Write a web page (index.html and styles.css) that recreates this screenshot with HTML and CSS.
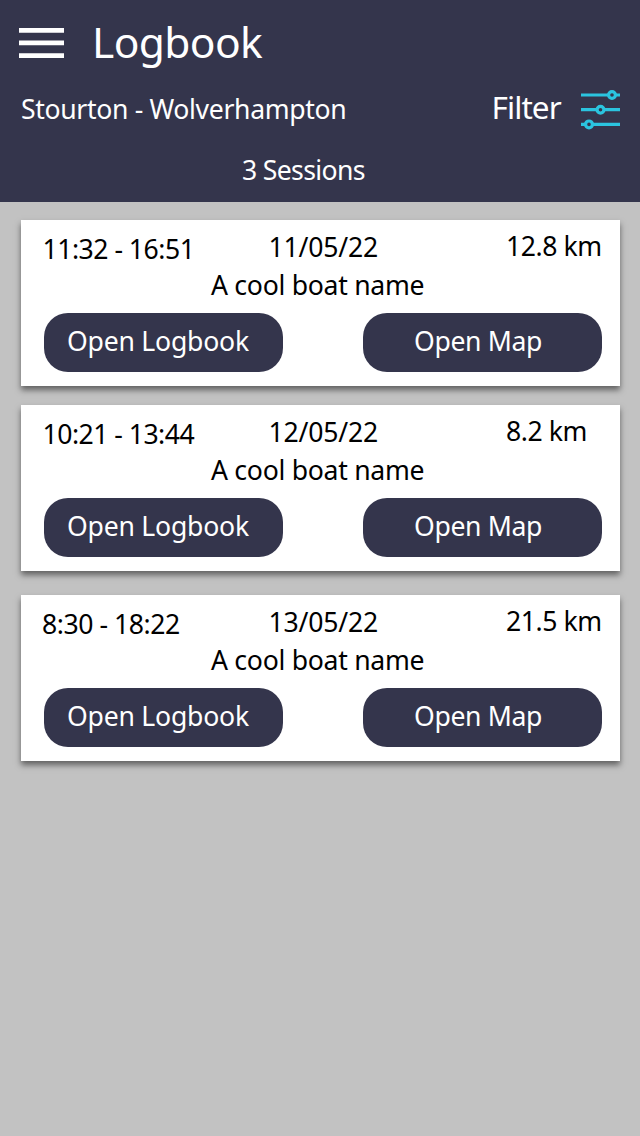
FILE: index.html
```html
<!DOCTYPE html>
<html lang="en">
<head>
<meta charset="utf-8">
<title>Logbook</title>
<link rel="stylesheet" href="styles.css">
</head>
<body>
<header class="header">
  <div class="title-row">
    <svg class="menu" viewBox="0 0 45 30" aria-label="Menu"><path fill="#fff" d="M0 0h45v4.7H0zM0 12.6h45v4.7H0zM0 25.3h45V30H0z"/></svg>
    <h1 class="title">Logbook</h1>
  </div>
  <div class="route-row">
    <span class="route">Stourton - Wolverhampton</span>
    <span class="filter">Filter</span>
    <svg class="filter-icon" viewBox="0 0 39 40" fill="none" stroke="#2bc4df" stroke-width="3.2">
      <path d="M0 5h27.5M34.500 5H39M0 19.700h16M23 19.700h16M0 34.400h4.500M11.500 34.400H39"/>
      <circle cx="31" cy="5" r="3.400"/><circle cx="19.500" cy="19.700" r="3.400"/><circle cx="8" cy="34.400" r="3.400"/>
    </svg>
  </div>
  <div class="sessions">3 Sessions</div>
</header>
<main class="list">
  <article class="card">
    <div class="info">
      <span class="time time-narrow">11:32 - 16:51</span><span class="date">11/05/22</span><span class="distance">12.8 km</span>
    </div>
    <div class="boat">A cool boat name</div>
    <div class="actions"><button class="button button-log">Open Logbook</button><button class="button button-map">Open Map</button></div>
  </article>
  <article class="card">
    <div class="info">
      <span class="time">10:21 - 13:44</span><span class="date">12/05/22</span><span class="distance">8.2 km</span>
    </div>
    <div class="boat">A cool boat name</div>
    <div class="actions"><button class="button button-log">Open Logbook</button><button class="button button-map">Open Map</button></div>
  </article>
  <article class="card card-last">
    <div class="info">
      <span class="time time-short">8:30 - 18:22</span><span class="date">13/05/22</span><span class="distance">21.5 km</span>
    </div>
    <div class="boat">A cool boat name</div>
    <div class="actions"><button class="button button-log">Open Logbook</button><button class="button button-map">Open Map</button></div>
  </article>
</main>
</body>
</html>
```
FILE: styles.css
```css
* { box-sizing: border-box; }

body {
  margin: 0;
  min-height: 1136px;
  background: #c2c2c2;
  color: #000;
  font: 26.6px/30px "Noto Sans", "Open Sans", sans-serif;
  white-space: nowrap;
}

.header {
  height: 202px;
  background: #34354c;
  color: #fff;
}

.title-row {
  display: flex;
  height: 84px;
  padding: 16px 0 0 19px;
}

.menu {
  width: 45px;
  height: 30px;
  margin-top: 12px;
}

.title {
  margin: 1px 0 0 28px;
  font-size: 42.5px;
  font-weight: 400;
  line-height: 50px;
  letter-spacing: -0.6px;
}

.route-row {
  display: grid;
  grid-template-columns: 469.5px 90.5px 39px;
  height: 71px;
  padding-left: 21px;
}

.route {
  margin-top: 10px;
  letter-spacing: -0.34px;
}

.filter {
  margin-top: 8px;
  padding-left: 1px;
  font-size: 31.5px;
  letter-spacing: -0.9px;
}

.filter-icon {
  width: 39px;
  height: 40px;
  margin-top: 6px;
}

.sessions {
  padding-left: 242px;
  letter-spacing: -0.65px;
}

.list {
  padding: 18px 20px 0 21px;
}

.card {
  height: 166px;
  margin-bottom: 19px;
  padding-top: 10px;
  background: #fff;
  box-shadow: 0 4px 6px rgba(0, 0, 0, 0.5);
}

.card-last {
  margin-top: 24px;
}

.info {
  display: grid;
  grid-template-columns: 226px 237px 1fr;
  height: 40px;
  padding-left: 22px;
}

.time {
  margin-top: 4px;
  margin-left: -0.5px;
  letter-spacing: -0.52px;
}

.time-narrow {
  letter-spacing: -0.5px;
}

.time-short {
  margin-left: -1px;
  letter-spacing: -0.45px;
}

.date {
  margin-top: 2px;
  margin-left: -0.5px;
  letter-spacing: -0.2px;
}

.distance {
  margin-top: 1px;
  letter-spacing: -0.45px;
}

.boat {
  padding-left: 190px;
  letter-spacing: -0.28px;
}

.actions {
  display: flex;
  gap: 80px;
  margin-top: 13px;
  padding-left: 23px;
}

.button {
  width: 239px;
  height: 59px;
  padding: 0 0 4px;
  border: 0;
  border-radius: 24px;
  background: #34354c;
  color: #fff;
  font: inherit;
  text-align: left;
}

.button-log {
  padding-left: 23px;
  letter-spacing: -0.22px;
}

.button-map {
  padding-left: 51px;
  letter-spacing: -0.35px;
}
```
